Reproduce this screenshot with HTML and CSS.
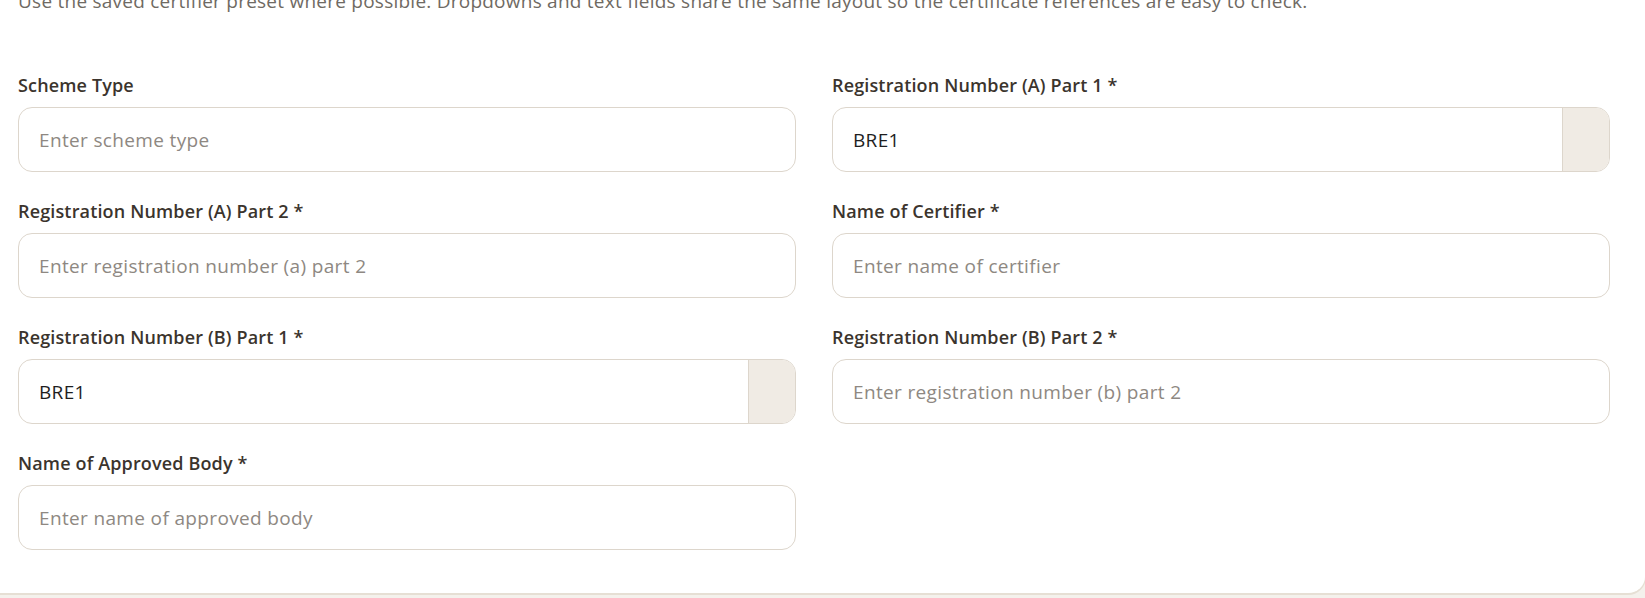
FILE: index.html
```html
<!DOCTYPE html>
<html lang="en">
<head>
<meta charset="utf-8">
<title>Certifier details</title>
<link rel="stylesheet" href="styles.css">
</head>
<body>
<section class="card">
  <p class="desc">Use the saved certifier preset where possible. Dropdowns and text fields share the same layout so the certificate references are easy to check.</p>
  <div class="grid">
    <div class="field">
      <label class="label">Scheme Type</label>
      <div class="control"><input class="input" type="text" placeholder="Enter scheme type"></div>
    </div>
    <div class="field">
      <label class="label">Registration Number (A) Part 1 *</label>
      <div class="control"><input class="input" type="text" value="BRE1"><span class="addon"></span></div>
    </div>
    <div class="field">
      <label class="label">Registration Number (A) Part 2 *</label>
      <div class="control"><input class="input" type="text" placeholder="Enter registration number (a) part 2"></div>
    </div>
    <div class="field">
      <label class="label">Name of Certifier *</label>
      <div class="control"><input class="input" type="text" placeholder="Enter name of certifier"></div>
    </div>
    <div class="field">
      <label class="label">Registration Number (B) Part 1 *</label>
      <div class="control"><input class="input" type="text" value="BRE1"><span class="addon"></span></div>
    </div>
    <div class="field">
      <label class="label">Registration Number (B) Part 2 *</label>
      <div class="control"><input class="input" type="text" placeholder="Enter registration number (b) part 2"></div>
    </div>
    <div class="field">
      <label class="label">Name of Approved Body *</label>
      <div class="control"><input class="input" type="text" placeholder="Enter name of approved body"></div>
    </div>
  </div>
</section>
</body>
</html>
```
FILE: styles.css
```css
html, body {
  margin: 0;
  padding: 0;
  background: #f4f1ec;
  font-family: "Open Sans", "Noto Sans", sans-serif;
  overflow: hidden;
}

.card {
  background: #ffffff;
  border-bottom: 2px solid #e6dfd4;
  border-right: 1px solid #e6dfd4;
  border-bottom-right-radius: 18px;
  margin-right: -1px;
  padding: 0 35px 43px 18px;
}

.desc {
  margin: -12px 0 59px;
  font-size: 19px;
  letter-spacing: 0.24px;
  line-height: 26px;
  color: #6f6a63;
}

.grid {
  display: grid;
  grid-template-columns: 1fr 1fr;
  column-gap: 36px;
  row-gap: 27px;
}

.field {
  display: flex;
  flex-direction: column;
  gap: 10px;
}

.label {
  font-size: 18px;
  letter-spacing: 0.15px;
  line-height: 24px;
  font-weight: 600;
  color: #3b342d;
}

.control {
  display: flex;
  height: 65px;
  box-sizing: border-box;
  border: 1px solid #ddd6cc;
  border-radius: 14px;
  background: #fff;
  overflow: hidden;
}

.input {
  flex: 1;
  min-width: 0;
  border: 0;
  outline: none;
  background: transparent;
  padding: 0 20px;
  font-family: inherit;
  font-size: 19px;
  letter-spacing: 0.35px;
  color: #1e1e1e;
}

.input::placeholder {
  color: #8e8882;
}

.addon {
  width: 46px;
  background: #f0ebe4;
  border-left: 1px solid #ddd6cc;
}
```
